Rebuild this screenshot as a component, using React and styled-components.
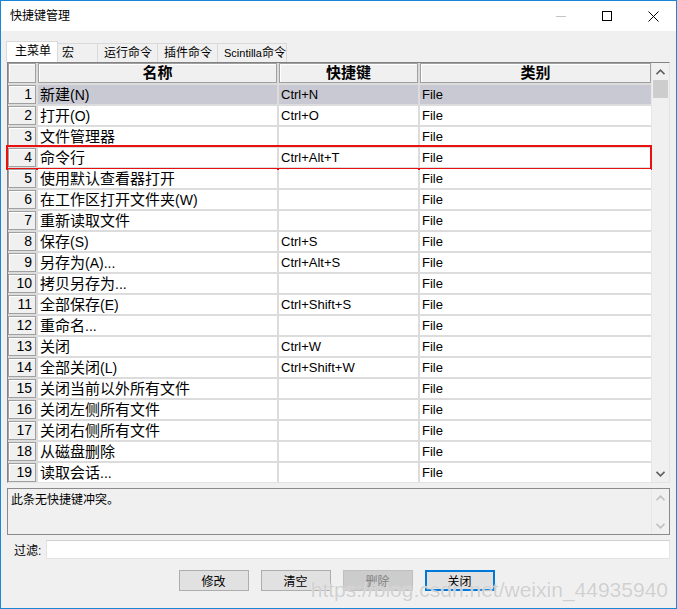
import React from 'react';
import styled, { createGlobalStyle } from 'styled-components';

const GlobalStyle = createGlobalStyle`
  html, body {
    margin: 0;
    padding: 0;
    background: #fff;
  }
  body {
    font-family: "Liberation Sans", "Noto Sans CJK SC", sans-serif;
    color: #000;
  }
`;

const rows = [
  ['新建(N)', 'Ctrl+N'],
  ['打开(O)', 'Ctrl+O'],
  ['文件管理器', ''],
  ['命令行', 'Ctrl+Alt+T'],
  ['使用默认查看器打开', ''],
  ['在工作区打开文件夹(W)', ''],
  ['重新读取文件', ''],
  ['保存(S)', 'Ctrl+S'],
  ['另存为(A)...', 'Ctrl+Alt+S'],
  ['拷贝另存为...', ''],
  ['全部保存(E)', 'Ctrl+Shift+S'],
  ['重命名...', ''],
  ['关闭', 'Ctrl+W'],
  ['全部关闭(L)', 'Ctrl+Shift+W'],
  ['关闭当前以外所有文件', ''],
  ['关闭左侧所有文件', ''],
  ['关闭右侧所有文件', ''],
  ['从磁盘删除', ''],
  ['读取会话...', ''],
];

const tabs = [
  { label: '主菜单', width: 52, pad: 8, active: true },
  { label: '宏', width: 40, pad: 4 },
  { label: '运行命令', width: 60, pad: 6 },
  { label: '插件命令', width: 60, pad: 6 },
  { label: 'Scintilla命令', width: 69, pad: 6 },
];

// ascii runs are drawn a bit smaller than the CJK glyphs, like the original UI font
const Mixed = ({ text, latin }) =>
  text.split(/([\x20-\x7e]+)/).filter(Boolean).map((part, i) =>
    /^[\x20-\x7e]+$/.test(part) ? <Latin key={i} $size={latin}>{part}</Latin> : <span key={i}>{part}</span>
  );

const Latin = styled.span`
  font-family: "Liberation Sans", sans-serif;
  font-size: ${p => p.$size}px;
`;

const Window = styled.div`
  position: relative;
  box-sizing: border-box;
  width: 677px;
  height: 609px;
  border: 1px solid #1a86d9;
  background: #f0f0f0;
  display: flex;
  flex-direction: column;
  overflow: hidden;
`;

const TitleBar = styled.div`
  height: 30px;
  background: #fff;
  display: flex;
  align-items: center;
  padding-left: 9px;
  font-size: 12px;
`;

const Title = styled.div`
  flex: 1;
  line-height: 30px;
`;

const Controls = styled.div`
  display: flex;
  height: 100%;
`;

const ControlButton = styled.div`
  width: 46px;
  display: flex;
  align-items: center;
  justify-content: center;
`;

const Body = styled.div`
  flex: 1;
  display: flex;
  flex-direction: column;
  padding: 10px 6px 0 6px;
`;

const TabStrip = styled.div`
  display: flex;
  align-items: flex-end;
  height: 21px;
`;

const Tab = styled.div`
  box-sizing: border-box;
  width: ${p => p.$width}px;
  height: ${p => (p.$active ? 21 : 19)}px;
  margin-left: ${p => (p.$active ? -1 : 0)}px;
  padding-left: ${p => p.$pad}px;
  background: ${p => (p.$active ? '#fff' : '#f0f0f0')};
  border: 1px solid #d9d9d9;
  border-left-width: ${p => (p.$active ? 1 : 0)}px;
  border-bottom: none;
  font-size: 12px;
  line-height: ${p => (p.$active ? 19 : 18)}px;
  white-space: nowrap;
  position: relative;
  z-index: ${p => (p.$active ? 1 : 0)};
`;

const GridFrame = styled.div`
  display: flex;
  height: 421px;
  box-sizing: border-box;
  border: 1px solid;
  border-color: #828282 #e3e3e3 #e3e3e3 #828282;
`;

const Table = styled.div`
  flex: 1;
  display: flex;
  flex-direction: column;
  gap: 2px;
  background: #dcdcdc;
`;

const Row = styled.div`
  position: relative;
  display: grid;
  grid-template-columns: 28px 239px 139px 1fr;
  column-gap: 2px;
  height: ${p => (p.$header ? 20 : 19)}px;

  ${p => p.$marked && `
    &::after {
      content: '';
      position: absolute;
      left: -2px;
      right: -1px;
      top: -3px;
      bottom: -3px;
      border: 2px solid #e81010;
      pointer-events: none;
    }
  `}
`;

const Bevel = styled.div`
  box-sizing: border-box;
  background: #f0f0f0;
  border: 1px solid #a0a0a0;
  box-shadow: inset 1px 1px 0 #fff;
`;

const HeadCell = styled(Bevel)`
  font-size: 15px;
  font-weight: bold;
  text-align: center;
  line-height: 18px;
`;

const NumCell = styled(Bevel)`
  font-size: 14px;
  text-align: right;
  padding-right: 3px;
  line-height: 17px;
`;

const Cell = styled.div`
  box-sizing: border-box;
  background: ${p => (p.$selected ? '#c9c9d3' : '#fff')};
  padding-left: ${p => p.$pad}px;
  font-size: ${p => p.$size}px;
  line-height: 19px;
  white-space: nowrap;
  overflow: hidden;
`;

const ScrollBar = styled.div`
  width: 17px;
  background: #f0f0f0;
  display: flex;
  flex-direction: column;
  border-left: 1px solid #e8e8e8;
`;

const Arrow = styled.div`
  height: 17px;
  display: flex;
  align-items: center;
  justify-content: center;
`;

const Thumb = styled.div`
  height: 18px;
  margin: 0 1px;
  background: #cdcdcd;
`;

const Track = styled.div`
  flex: 1;
`;

const MessageBox = styled.div`
  margin-top: 5px;
  height: 47px;
  box-sizing: border-box;
  border: 1px solid #8a8a8a;
  display: flex;
`;

const Message = styled.div`
  flex: 1;
  padding: 3px 3px;
  font-size: 12px;
  line-height: 16px;
`;

const FilterRow = styled.div`
  margin-top: 4px;
  display: flex;
  align-items: center;
  height: 20px;
`;

const FilterLabel = styled.div`
  width: 32px;
  padding-left: 7px;
  font-size: 12px;
`;

const FilterInput = styled.div`
  flex: 1;
  height: 19px;
  box-sizing: border-box;
  background: #fff;
  border: 1px solid #e3e3e3;
  border-top-color: #d0d0d0;
`;

const ButtonRow = styled.div`
  margin-top: 11px;
  padding-right: 4px;
  display: flex;
  justify-content: center;
  gap: 12px;
`;

const Button = styled.div`
  box-sizing: border-box;
  width: 70px;
  height: 21px;
  display: flex;
  align-items: center;
  justify-content: center;
  font-size: 12px;
  background: ${p => (p.$disabled ? '#cccccc' : '#e1e1e1')};
  color: ${p => (p.$disabled ? '#838383' : '#000')};
  border: ${p => (p.$default ? '2px solid #0078d7' : `1px solid ${p.$disabled ? '#bfbfbf' : '#adadad'}`)};
`;

const Watermark = styled.div`
  position: absolute;
  right: 8px;
  bottom: 6px;
  font-family: "Liberation Sans", sans-serif;
  font-size: 21px;
  line-height: 24px;
  color: rgba(196, 196, 196, 0.8);
  text-shadow: 0 0 1px #fff;
  pointer-events: none;
`;

const Chevron = ({ up, color }) => (
  <svg width="9" height="6" viewBox="0 0 9 6">
    <path d={up ? 'M0.5 5.2 L4.5 1.2 L8.5 5.2' : 'M0.5 0.8 L4.5 4.8 L8.5 0.8'} fill="none" stroke={color} strokeWidth="1.6" />
  </svg>
);

export default function App() {
  return (
    <>
      <GlobalStyle />
      <Window>
        <TitleBar>
          <Title>快捷键管理</Title>
          <Controls>
            <ControlButton>
              <svg width="10" height="10" viewBox="0 0 10 10">
                <path d="M0 5.5 H10" stroke="#c4c4c4" strokeWidth="1" />
              </svg>
            </ControlButton>
            <ControlButton>
              <svg width="10" height="10" viewBox="0 0 10 10">
                <rect x="0.5" y="0.5" width="9" height="9" fill="none" stroke="#000" strokeWidth="1" />
              </svg>
            </ControlButton>
            <ControlButton>
              <svg width="11" height="11" viewBox="0 0 11 11">
                <path d="M0.5 0.5 L10.5 10.5 M10.5 0.5 L0.5 10.5" stroke="#000" strokeWidth="1" />
              </svg>
            </ControlButton>
          </Controls>
        </TitleBar>

        <Body>
          <TabStrip>
            {tabs.map(t => (
              <Tab key={t.label} $width={t.width} $pad={t.pad} $active={t.active}>
                <Mixed text={t.label} latin={11} />
              </Tab>
            ))}
          </TabStrip>

          <GridFrame>
            <Table>
              <Row $header>
                <Bevel />
                <HeadCell>名称</HeadCell>
                <HeadCell>快捷键</HeadCell>
                <HeadCell>类别</HeadCell>
              </Row>
              {rows.map(([name, key], i) => (
                <Row key={i} $marked={i === 3}>
                  <NumCell>{i + 1}</NumCell>
                  <Cell $selected={i === 0} $pad={2} $size={15}>
                    <Mixed text={name} latin={14} />
                  </Cell>
                  <Cell $selected={i === 0} $pad={2} $size={13}>{key}</Cell>
                  <Cell $selected={i === 0} $pad={2} $size={13}>File</Cell>
                </Row>
              ))}
            </Table>
            <ScrollBar>
              <Arrow><Chevron up color="#606060" /></Arrow>
              <Thumb />
              <Track />
              <Arrow><Chevron color="#606060" /></Arrow>
            </ScrollBar>
          </GridFrame>

          <MessageBox>
            <Message>此条无快捷键冲突。</Message>
            <ScrollBar>
              <Arrow><Chevron up color="#c0c0c0" /></Arrow>
              <Track />
              <Arrow><Chevron color="#c0c0c0" /></Arrow>
            </ScrollBar>
          </MessageBox>

          <FilterRow>
            <FilterLabel>过滤:</FilterLabel>
            <FilterInput />
          </FilterRow>

          <ButtonRow>
            <Button>修改</Button>
            <Button>清空</Button>
            <Button $disabled>删除</Button>
            <Button $default>关闭</Button>
          </ButtonRow>
        </Body>

        <Watermark>https://blog.csdn.net/weixin_44935940</Watermark>
      </Window>
    </>
  );
}
